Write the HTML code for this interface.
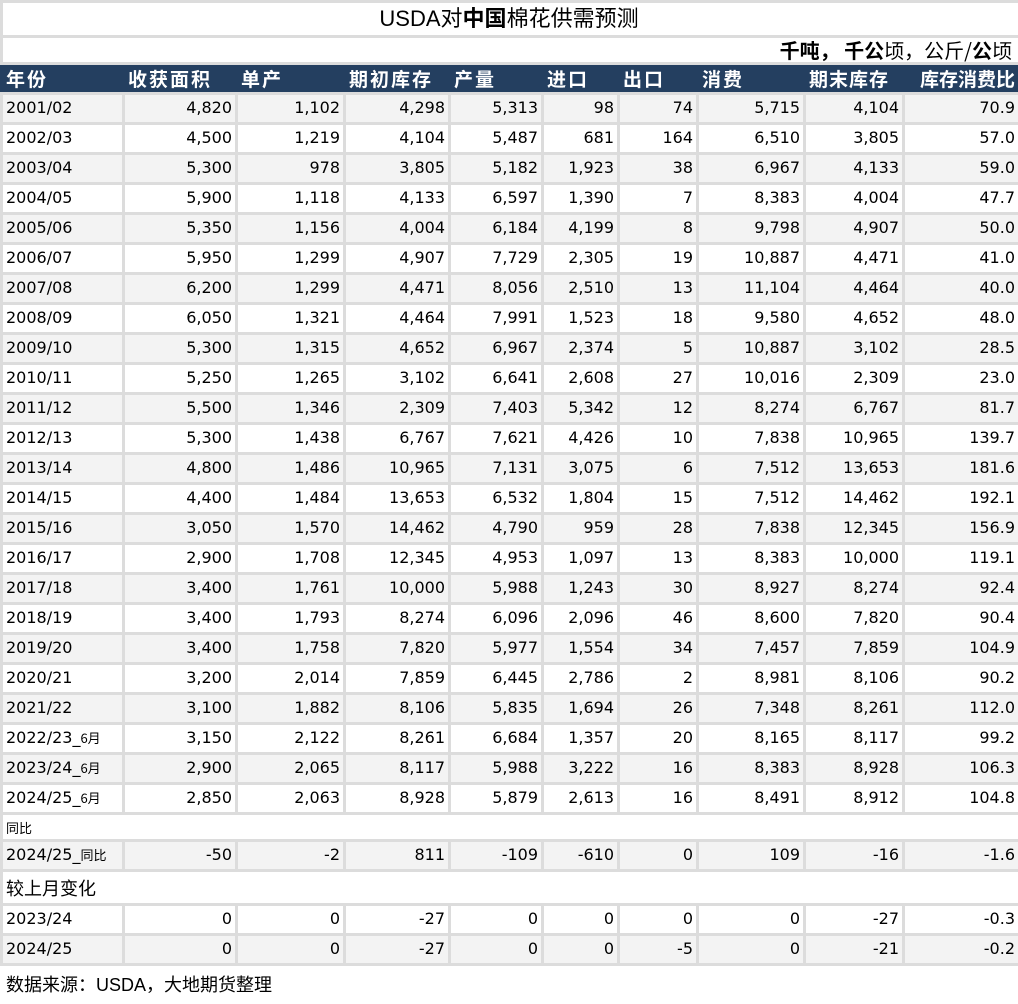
<!DOCTYPE html>
<html><head><meta charset="utf-8"><style>
html,body{margin:0;padding:0;background:#fff;}
body{width:1018px;height:1004px;overflow:hidden;}
table{border-collapse:collapse;table-layout:fixed;width:1018px;font-family:"DejaVu Sans","Noto Sans CJK SC",sans-serif;font-size:16px;color:#000;}
td,th{border:3px solid #dcdcdc;padding:0 3px;overflow:hidden;white-space:nowrap;}
td{text-align:right;}
td.l{text-align:left;}
tr.g td{background:#f3f3f3;}
tr.d{height:30px;}
tr.d td{padding-bottom:3px;}
th{background:#243f60;color:#fff;font-family:"Noto Sans CJK SC",sans-serif;font-weight:bold;font-size:19px;letter-spacing:2px;text-align:left;border-left-color:#243f60;border-right-color:#243f60;border-top-color:#dcdcdc;border-bottom-color:#dcdcdc;height:27px;line-height:24px;padding:0 3px;}
th.r{text-align:right;letter-spacing:0;}
td.plain{border-left:3px solid #dcdcdc;border-right:3px solid #dcdcdc;text-align:left;}
.cn{font-family:"Noto Sans CJK SC",sans-serif;}
.sm{font-size:13px;}
</style></head><body>
<table>
<colgroup><col style="width:122px"><col style="width:113px"><col style="width:108px"><col style="width:105px"><col style="width:93px"><col style="width:76px"><col style="width:79px"><col style="width:107px"><col style="width:99px"><col style="width:116px"></colgroup>
<tr style="height:35px"><td colspan="10" style="text-align:center;font-family:'Liberation Sans','Noto Sans CJK SC',sans-serif;font-size:22px;padding-left:0;line-height:30px;">USDA对<b>中国</b>棉花供需预测</td></tr>
<tr style="height:26px"><td colspan="10" class="cn" style="font-size:20px;padding-right:6px;line-height:24px;"><b>千吨， 千公</b>顷，公斤/<b>公</b>顷</td></tr>
<tr><th>年份</th><th>收获面积</th><th>单产</th><th>期初库存</th><th>产量</th><th>进口</th><th>出口</th><th>消费</th><th style="letter-spacing:1px">期末库存</th><th class="r">库存消费比</th></tr>
<tr class="d g"><td class="l">2001/02</td><td>4,820</td><td>1,102</td><td>4,298</td><td>5,313</td><td>98</td><td>74</td><td>5,715</td><td>4,104</td><td>70.9</td></tr>
<tr class="d"><td class="l">2002/03</td><td>4,500</td><td>1,219</td><td>4,104</td><td>5,487</td><td>681</td><td>164</td><td>6,510</td><td>3,805</td><td>57.0</td></tr>
<tr class="d g"><td class="l">2003/04</td><td>5,300</td><td>978</td><td>3,805</td><td>5,182</td><td>1,923</td><td>38</td><td>6,967</td><td>4,133</td><td>59.0</td></tr>
<tr class="d"><td class="l">2004/05</td><td>5,900</td><td>1,118</td><td>4,133</td><td>6,597</td><td>1,390</td><td>7</td><td>8,383</td><td>4,004</td><td>47.7</td></tr>
<tr class="d g"><td class="l">2005/06</td><td>5,350</td><td>1,156</td><td>4,004</td><td>6,184</td><td>4,199</td><td>8</td><td>9,798</td><td>4,907</td><td>50.0</td></tr>
<tr class="d"><td class="l">2006/07</td><td>5,950</td><td>1,299</td><td>4,907</td><td>7,729</td><td>2,305</td><td>19</td><td>10,887</td><td>4,471</td><td>41.0</td></tr>
<tr class="d g"><td class="l">2007/08</td><td>6,200</td><td>1,299</td><td>4,471</td><td>8,056</td><td>2,510</td><td>13</td><td>11,104</td><td>4,464</td><td>40.0</td></tr>
<tr class="d"><td class="l">2008/09</td><td>6,050</td><td>1,321</td><td>4,464</td><td>7,991</td><td>1,523</td><td>18</td><td>9,580</td><td>4,652</td><td>48.0</td></tr>
<tr class="d g"><td class="l">2009/10</td><td>5,300</td><td>1,315</td><td>4,652</td><td>6,967</td><td>2,374</td><td>5</td><td>10,887</td><td>3,102</td><td>28.5</td></tr>
<tr class="d"><td class="l">2010/11</td><td>5,250</td><td>1,265</td><td>3,102</td><td>6,641</td><td>2,608</td><td>27</td><td>10,016</td><td>2,309</td><td>23.0</td></tr>
<tr class="d g"><td class="l">2011/12</td><td>5,500</td><td>1,346</td><td>2,309</td><td>7,403</td><td>5,342</td><td>12</td><td>8,274</td><td>6,767</td><td>81.7</td></tr>
<tr class="d"><td class="l">2012/13</td><td>5,300</td><td>1,438</td><td>6,767</td><td>7,621</td><td>4,426</td><td>10</td><td>7,838</td><td>10,965</td><td>139.7</td></tr>
<tr class="d g"><td class="l">2013/14</td><td>4,800</td><td>1,486</td><td>10,965</td><td>7,131</td><td>3,075</td><td>6</td><td>7,512</td><td>13,653</td><td>181.6</td></tr>
<tr class="d"><td class="l">2014/15</td><td>4,400</td><td>1,484</td><td>13,653</td><td>6,532</td><td>1,804</td><td>15</td><td>7,512</td><td>14,462</td><td>192.1</td></tr>
<tr class="d g"><td class="l">2015/16</td><td>3,050</td><td>1,570</td><td>14,462</td><td>4,790</td><td>959</td><td>28</td><td>7,838</td><td>12,345</td><td>156.9</td></tr>
<tr class="d"><td class="l">2016/17</td><td>2,900</td><td>1,708</td><td>12,345</td><td>4,953</td><td>1,097</td><td>13</td><td>8,383</td><td>10,000</td><td>119.1</td></tr>
<tr class="d g"><td class="l">2017/18</td><td>3,400</td><td>1,761</td><td>10,000</td><td>5,988</td><td>1,243</td><td>30</td><td>8,927</td><td>8,274</td><td>92.4</td></tr>
<tr class="d"><td class="l">2018/19</td><td>3,400</td><td>1,793</td><td>8,274</td><td>6,096</td><td>2,096</td><td>46</td><td>8,600</td><td>7,820</td><td>90.4</td></tr>
<tr class="d g"><td class="l">2019/20</td><td>3,400</td><td>1,758</td><td>7,820</td><td>5,977</td><td>1,554</td><td>34</td><td>7,457</td><td>7,859</td><td>104.9</td></tr>
<tr class="d"><td class="l">2020/21</td><td>3,200</td><td>2,014</td><td>7,859</td><td>6,445</td><td>2,786</td><td>2</td><td>8,981</td><td>8,106</td><td>90.2</td></tr>
<tr class="d g"><td class="l">2021/22</td><td>3,100</td><td>1,882</td><td>8,106</td><td>5,835</td><td>1,694</td><td>26</td><td>7,348</td><td>8,261</td><td>112.0</td></tr>
<tr class="d"><td class="l">2022/23_<span class="cn sm">6月</span></td><td>3,150</td><td>2,122</td><td>8,261</td><td>6,684</td><td>1,357</td><td>20</td><td>8,165</td><td>8,117</td><td>99.2</td></tr>
<tr class="d g"><td class="l">2023/24_<span class="cn sm">6月</span></td><td>2,900</td><td>2,065</td><td>8,117</td><td>5,988</td><td>3,222</td><td>16</td><td>8,383</td><td>8,928</td><td>106.3</td></tr>
<tr class="d"><td class="l">2024/25_<span class="cn sm">6月</span></td><td>2,850</td><td>2,063</td><td>8,928</td><td>5,879</td><td>2,613</td><td>16</td><td>8,491</td><td>8,912</td><td>104.8</td></tr>
<tr style="height:27px"><td colspan="10" class="plain cn sm">同比</td></tr>
<tr class="d g"><td class="l">2024/25_<span class="cn sm">同比</span></td><td>-50</td><td>-2</td><td>811</td><td>-109</td><td>-610</td><td>0</td><td>109</td><td>-16</td><td>-1.6</td></tr>
<tr style="height:34px"><td colspan="10" class="plain cn" style="font-size:18px">较上月变化</td></tr>
<tr class="d"><td class="l">2023/24</td><td>0</td><td>0</td><td>-27</td><td>0</td><td>0</td><td>0</td><td>0</td><td>-27</td><td>-0.3</td></tr>
<tr class="d g"><td class="l">2024/25</td><td>0</td><td>0</td><td>-27</td><td>0</td><td>0</td><td>-5</td><td>0</td><td>-21</td><td>-0.2</td></tr>
</table>
<div style="font-family:'Liberation Sans','Noto Sans CJK SC',sans-serif;font-size:18px;padding:5px 0 0 6px;">数据来源：USDA，大地期货整理</div>
</body></html>
